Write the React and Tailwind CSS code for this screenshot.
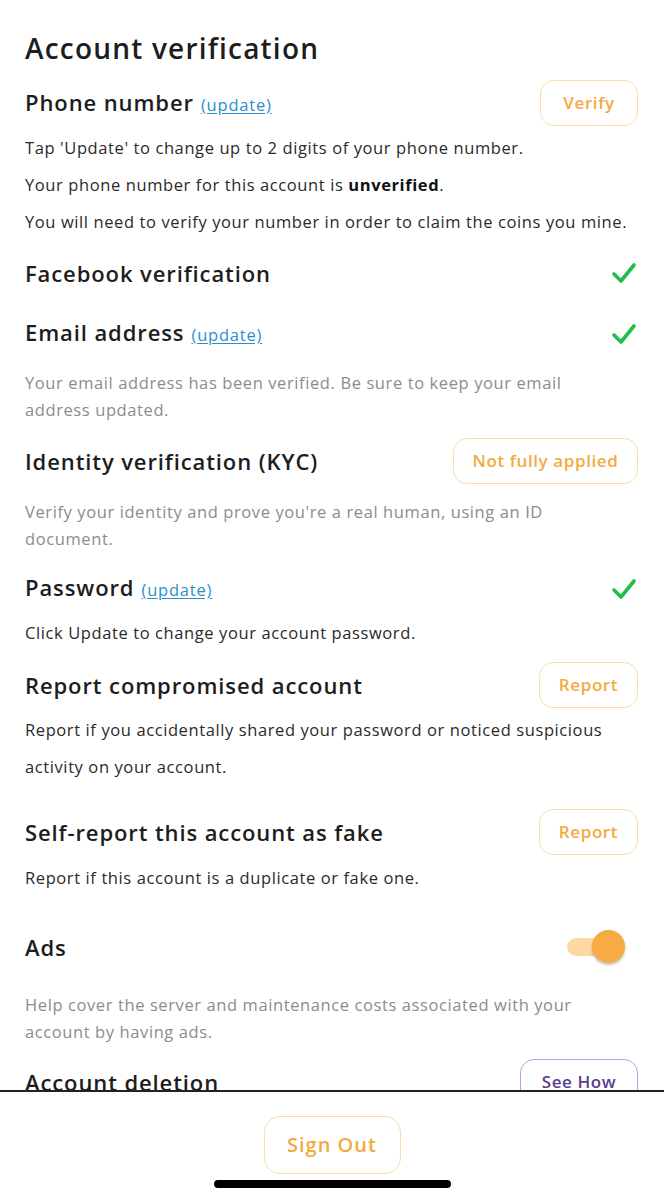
import React from "react";

const orangeBtn =
  "h-[46px] rounded-[14px] border-[1.5px] border-[#fbdcaa] bg-white text-[#f4aa3e] text-[17px] font-semibold tracking-[0.6px] flex items-center justify-center";

function Check() {
  return (
    <svg width="26" height="24" viewBox="0 0 26 24" className="mr-[1px]">
      <path
        d="M3 13 L10 20 L23 4"
        fill="none"
        stroke="#1fbf4c"
        strokeWidth="3.6"
        strokeLinecap="round"
        strokeLinejoin="round"
      />
    </svg>
  );
}

function Update() {
  return (
    <span className="ml-[7px] text-[16.5px] font-normal text-[#2a8fcd] underline underline-offset-2 tracking-[0.8px]">
      (update)
    </span>
  );
}

function Heading({ children, className = "" }) {
  return (
    <h2
      className={`text-[22px] font-semibold text-[#1d1d1d] leading-[30px] tracking-[0.9px] ${className}`}
    >
      {children}
    </h2>
  );
}

const body = "text-[16.5px] tracking-[0.6px]";

export default function App() {
  return (
    <div
      className="w-[664px] h-[1200px] bg-white flex flex-col overflow-hidden"
      style={{ fontFamily: "'Open Sans', 'Noto Sans', sans-serif" }}
    >
      {/* scrolling content */}
      <div className="h-[1090px] overflow-hidden pl-[25px] pr-[26px] pt-[30px]">
        <h1 className="text-[28px] font-semibold text-[#1d1d1d] leading-[36px] tracking-[1.2px]">
          Account verification
        </h1>

        <div className="mt-[14px] flex items-center justify-between">
          <Heading className="flex items-baseline">
            Phone number <Update />
          </Heading>
          <button className={`${orangeBtn} w-[98px]`}>Verify</button>
        </div>
        <div className={`mt-[3px] ${body} leading-[37px] text-[#2a2a2a]`}>
          <p>Tap 'Update' to change up to 2 digits of your phone number.</p>
          <p>
            Your phone number for this account is <b className="text-[#111]">unverified</b>.
          </p>
          <p>You will need to verify your number in order to claim the coins you mine.</p>
        </div>

        <div className="mt-[18px] flex items-center justify-between">
          <Heading>Facebook verification</Heading>
          <Check />
        </div>

        <div className="mt-[29px] flex items-center justify-between">
          <Heading className="flex items-baseline">
            Email address <Update />
          </Heading>
          <Check />
        </div>
        <p className={`mt-[19px] ${body} leading-[27px] text-[#8c8c8c]`}>
          Your email address has been verified. Be sure to keep your email
          <br />
          address updated.
        </p>

        <div className="mt-[15px] flex items-center justify-between">
          <Heading>Identity verification (KYC)</Heading>
          <button className={`${orangeBtn} w-[185px]`}>Not fully applied</button>
        </div>
        <p className={`mt-[14px] ${body} leading-[27px] text-[#8c8c8c]`}>
          Verify your identity and prove you're a real human, using an ID
          <br />
          document.
        </p>

        <div className="mt-[20px] flex items-center justify-between">
          <Heading className="flex items-baseline">
            Password <Update />
          </Heading>
          <Check />
        </div>
        <p className={`mt-[14px] ${body} leading-[27px] text-[#2a2a2a]`}>
          Click Update to change your account password.
        </p>

        <div className="mt-[16px] flex items-center justify-between">
          <Heading>Report compromised account</Heading>
          <button className={`${orangeBtn} w-[99px]`}>Report</button>
        </div>
        <p className={`mt-[3px] ${body} leading-[37px] text-[#2a2a2a]`}>
          Report if you accidentally shared your password or noticed suspicious
          <br />
          activity on your account.
        </p>

        <div className="mt-[24px] flex items-center justify-between">
          <Heading>Self-report this account as fake</Heading>
          <button className={`${orangeBtn} w-[99px]`}>Report</button>
        </div>
        <p className={`mt-[4px] ${body} leading-[37px] text-[#2a2a2a]`}>
          Report if this account is a duplicate or fake one.
        </p>

        <div className="mt-[34px] h-[34px] flex items-center justify-between">
          <Heading>Ads</Heading>
          <div className="relative w-[58px] h-[34px] mr-[13px]">
            <div className="absolute left-0 top-[8px] w-[50px] h-[18px] rounded-full bg-[#fcd9a4]" />
            <div className="absolute right-0 top-0 w-[33px] h-[33px] rounded-full bg-[#f8aa44] shadow-[0_2px_3px_rgba(0,0,0,0.25)]" />
          </div>
        </div>
        <p className={`mt-[27px] ${body} leading-[27px] text-[#8c8c8c]`}>
          Help cover the server and maintenance costs associated with your
          <br />
          account by having ads.
        </p>

        <div className="mt-[14px] flex items-center justify-between">
          <Heading>Account deletion</Heading>
          <button className="h-[46px] w-[118px] rounded-[14px] border-[1.5px] border-[#b9a3d9] bg-white text-[#5b3a8f] text-[17px] font-semibold tracking-[0.6px] flex items-center justify-center">
            See How
          </button>
        </div>
      </div>

      {/* footer */}
      <div className="flex-1 border-t-2 border-[#222] flex flex-col items-center">
        <button className="mt-[24px] w-[137px] h-[58px] rounded-[16px] border-[1.5px] border-[#fbdcaa] bg-white text-[#f4aa3e] text-[20px] font-semibold tracking-[1px]">
          Sign Out
        </button>
        <div className="mt-[6px] w-[237px] h-[8px] rounded-full bg-black" />
      </div>
    </div>
  );
}
